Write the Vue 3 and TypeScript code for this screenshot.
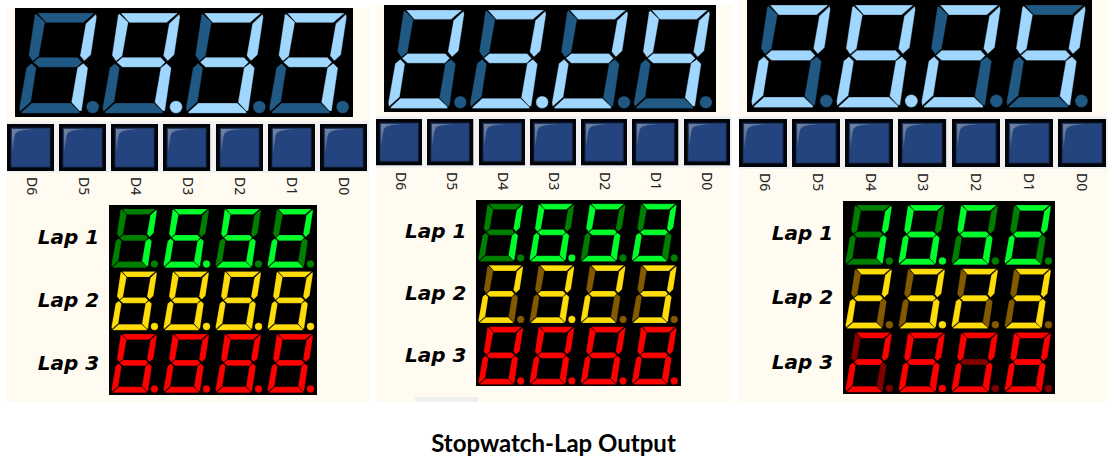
<script setup lang="ts">
type Segment = 'a' | 'b' | 'c' | 'd' | 'e' | 'f' | 'g'

interface Digit {
  value: string
  dot: boolean
}

interface Lap {
  name: string
  tone: string
  digits: Digit[]
}

interface Panel {
  id: string
  time: Digit[]
  laps: Lap[]
}

const shapes: { name: Segment; points: string }[] = [
  { name: 'a', points: '67,15 239,15 205,44 93,44' },
  { name: 'b', points: '243,18 245,28 228,140 208,159 195,143 212,47' },
  { name: 'c', points: '205,166 219,180 200,309 193,309 169,283 187,179' },
  { name: 'd', points: '50,285 167,285 194,311 194,316 20,316 20,312' },
  { name: 'e', points: '50,166 64,180 48,281 15,311 13,298 34,179' },
  { name: 'f', points: '63,17 90,43 72,144 53,160 41,142 59,22' },
  { name: 'g', points: '72,148 187,148 201,163 186,178 72,178 55,163' },
]

const lit: Record<string, string> = {
  '0': 'abcdef',
  '1': 'bc',
  '2': 'abdeg',
  '3': 'abcdg',
  '4': 'bcfg',
  '5': 'acdfg',
  '6': 'acdefg',
  '8': 'abcdefg',
  '9': 'abcfg',
}

function parse(text: string): Digit[] {
  return Array.from(text.matchAll(/(\d)(\.?)/g), (m) => ({ value: m[1], dot: m[2] === '.' }))
}

function makePanel(id: string, time: string, laps: string[]): Panel {
  const tones = ['green', 'yellow', 'red']
  return {
    id,
    time: parse(time),
    laps: laps.map((text, i) => ({ name: `Lap ${i + 1}`, tone: tones[i], digits: parse(text) })),
  }
}

const panels: Panel[] = [
  makePanel('first', '19.39', ['16.52', '8.8.8.8.', '8.8.8.8.']),
  makePanel('second', '23.29', ['16.52', '23.23', '8.8.8.8.']),
  makePanel('third', '28.24', ['16.52', '23.23', '28.08']),
]

const leds = ['D6', 'D5', 'D4', 'D3', 'D2', 'D1', 'D0']
</script>

<template>
  <main class="page">
    <section class="panels">
      <article v-for="panel in panels" :key="panel.id" class="panel" :class="panel.id">
        <svg class="time blue" viewBox="0 0 1014 328">
          <g v-for="(digit, i) in panel.time" :key="i" :transform="`translate(${i * 250} 0)`">
            <polygon
              v-for="shape in shapes"
              :key="shape.name"
              class="seg"
              :class="{ on: lit[digit.value].includes(shape.name) }"
              :points="shape.points"
            />
            <circle class="seg" :class="{ on: digit.dot }" cx="233" cy="297" r="19" />
          </g>
        </svg>

        <div class="leds">
          <svg v-for="led in leds" :key="led" class="led" viewBox="0 0 141 141">
            <defs>
              <linearGradient :id="`${panel.id}-${led}`" x1="0" y1="0" x2="1" y2="1">
                <stop offset="0" stop-color="#76859f" />
                <stop offset="0.3" stop-color="#5d7399" />
                <stop offset="0.6" stop-color="#23447f" />
              </linearGradient>
            </defs>
            <rect width="141" height="141" fill="#02040a" />
            <rect x="11" y="11" width="119" height="119" fill="#1c3157" />
            <rect x="14" y="14" width="113" height="113" fill="#23447f" />
            <path
              d="M15 15 H82 C56 19 36 17 26 28 C20 38 20 62 17 82 L15 82 Z"
              :fill="`url(#${panel.id}-${led})`"
            />
          </svg>
        </div>
        <div class="names">
          <span v-for="led in leds" :key="led" class="name">{{ led }}</span>
        </div>

        <div class="laps">
          <div class="labels">
            <span v-for="lap in panel.laps" :key="lap.name">{{ lap.name }}</span>
          </div>
          <svg class="matrix" viewBox="0 0 623 568">
            <g v-for="(lap, row) in panel.laps" :key="lap.name" :class="lap.tone">
              <g
                v-for="(digit, i) in lap.digits"
                :key="i"
                :transform="`translate(${i * 156} ${3 + row * 187.5}) scale(0.585)`"
              >
                <polygon
                  v-for="shape in shapes"
                  :key="shape.name"
                  class="seg"
                  :class="{ on: lit[digit.value].includes(shape.name) }"
                  :points="shape.points"
                />
                <circle class="seg" :class="{ on: digit.dot }" cx="233" cy="297" r="19" />
              </g>
            </g>
          </svg>
        </div>
      </article>
    </section>
    <h1 class="caption">Stopwatch-Lap Output</h1>
  </main>
</template>

<style>
body {
  margin: 0;
  background: #ffffff;
}
</style>

<style scoped>
.page {
  font-family: "Noto Sans", "Open Sans", sans-serif;
  color: #000000;
}

.panels {
  display: grid;
  grid-template-columns: 362fr 356fr 369fr;
  gap: 7px;
  padding: 0 7px;
}

.panel {
  display: flex;
  flex-direction: column;
  min-width: 0;
  padding-bottom: 7px;
  background: #fffbf0;
}

.first {
  margin-top: 8px;
}

.second {
  margin-top: 5px;
  background: linear-gradient(#efeff0, #efeff0) 39px 100% / 63px 5px no-repeat #fffbf0;
}

.time {
  display: block;
  margin: 0 16px 0 8px;
  background: #000000;
}

.seg {
  fill: var(--off);
  stroke: rgba(0, 0, 0, 0.3);
  stroke-width: 3;
}

.seg.on {
  fill: var(--on);
}

.blue {
  --on: #a0d7ff;
  --off: #205983;
}

.green {
  --on: #00ff2b;
  --off: #008000;
}

.yellow {
  --on: #ffdd0a;
  --off: #845a00;
}

.red {
  --on: #ff0000;
  --off: #800000;
}

.leds,
.names {
  display: grid;
  grid-template-columns: repeat(7, 1fr);
  gap: 5px;
  padding-right: 2px;
}

.leds {
  margin-top: 4px;
  padding-top: 3px;
  padding-bottom: 2px;
  background: #f2f2f2;
}

.led {
  display: block;
  width: 100%;
}

.names {
  height: 28px;
  padding-top: 4px;
  padding-left: 2px;
}

.name {
  display: flex;
  align-items: center;
  justify-self: center;
  writing-mode: vertical-rl;
  font-size: 14px;
  line-height: 20px;
  color: #222222;
}

.laps {
  display: flex;
}

.labels {
  display: flex;
  flex: 1;
  flex-direction: column;
  justify-content: space-around;
  padding-right: 10px;
  font: italic 700 20px/24px "DejaVu Sans", sans-serif;
  text-align: right;
  white-space: nowrap;
}

.matrix {
  display: block;
  width: 57.4%;
  margin-right: 14.4%;
  background: #000000;
}

.caption {
  margin: 27px 8px 0 0;
  font: 700 24px/28px Lato, sans-serif;
  text-align: center;
}
</style>
